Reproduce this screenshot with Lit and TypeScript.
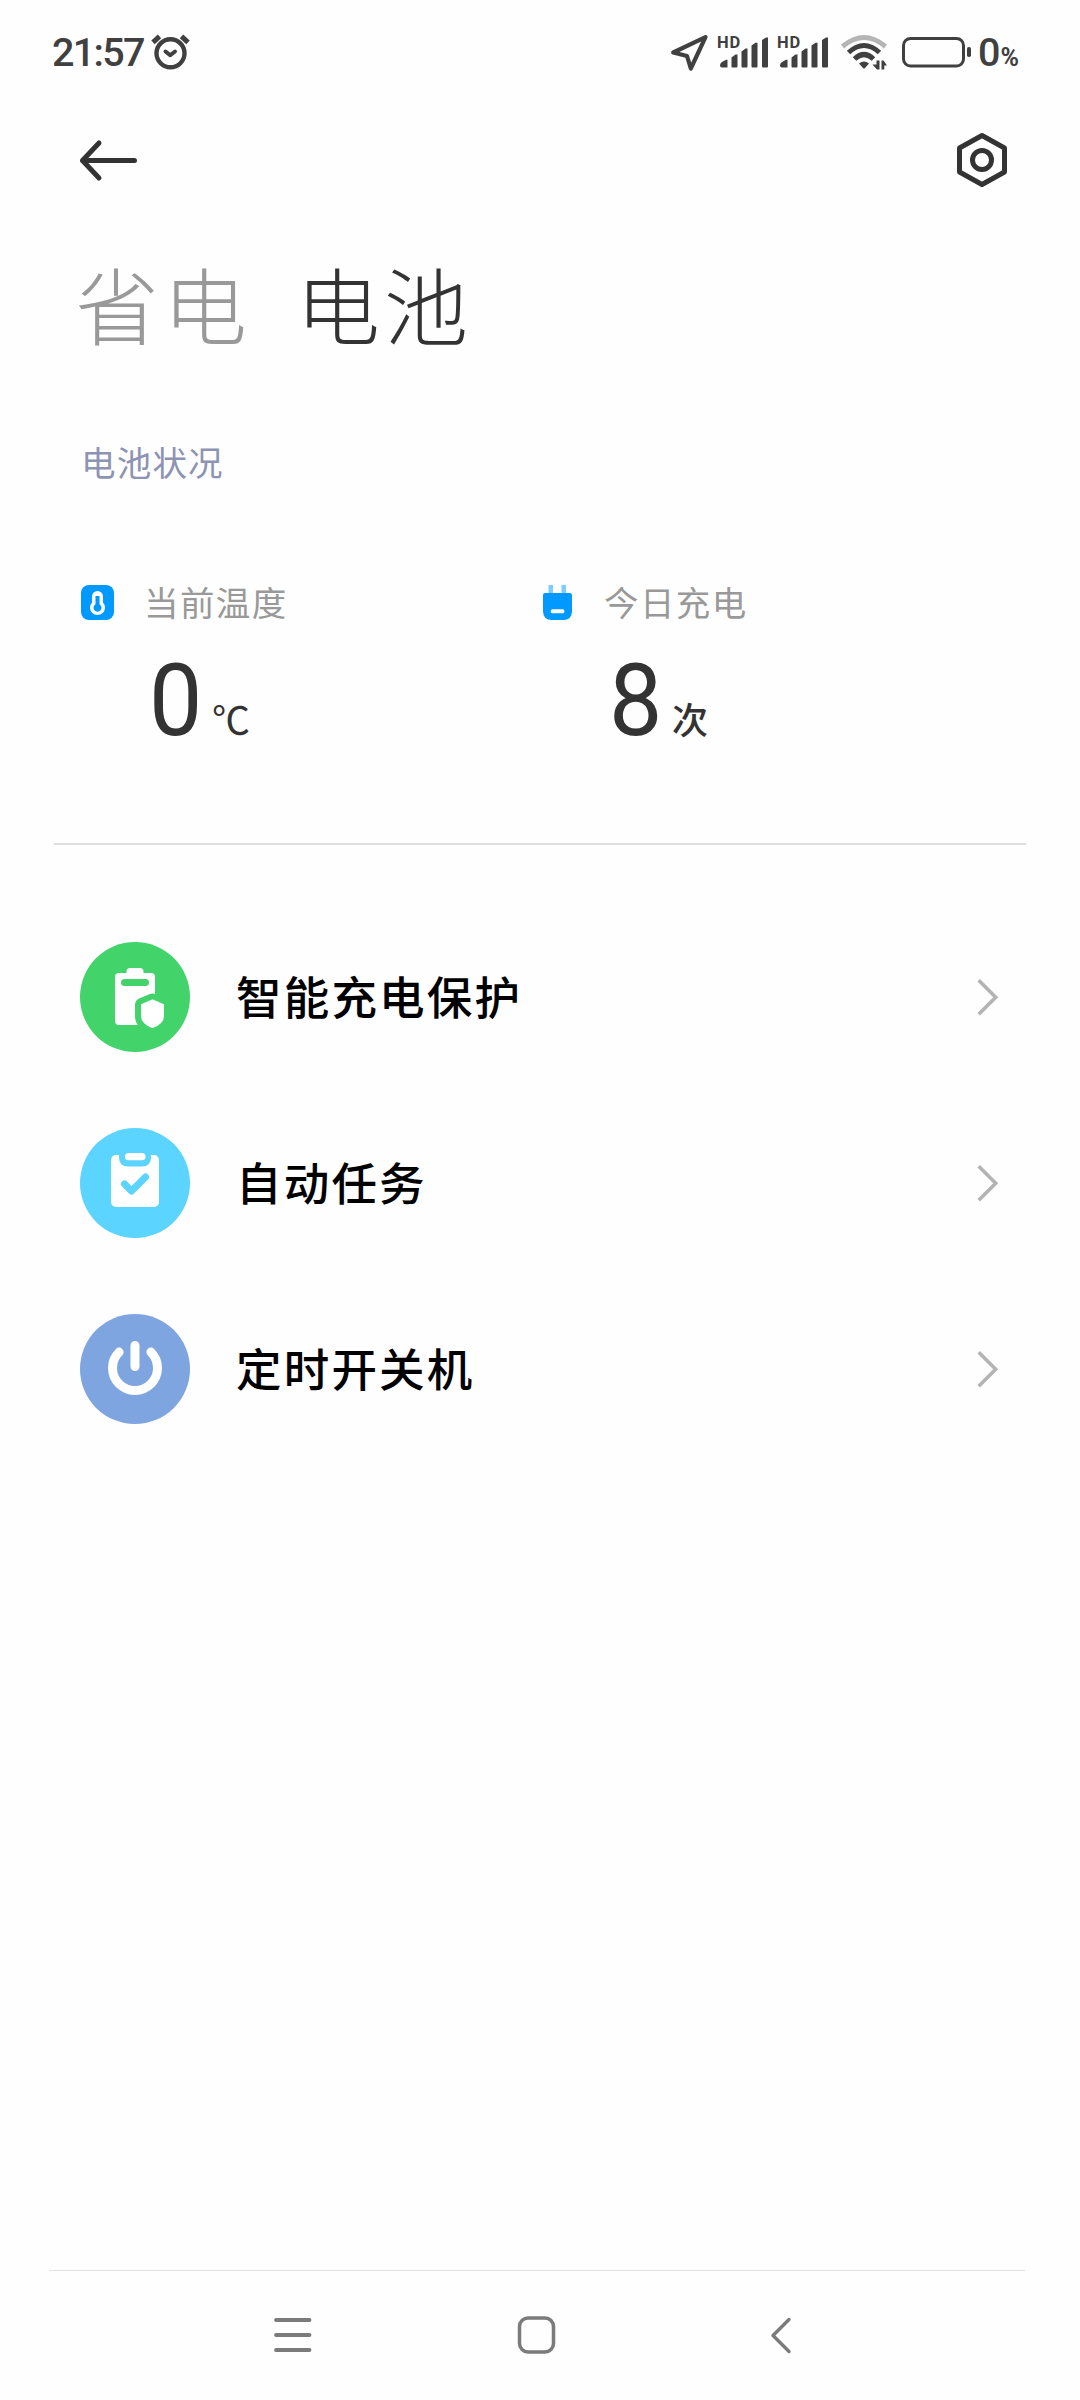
import { LitElement, html, svg, css } from "lit";
import { customElement, property } from "lit/decorators.js";

const signal = () => html`
  <svg class="icon" width="60" height="44" viewBox="0 0 60 44">
    <text class="hd" x="3" y="18">HD</text>
    <path
      fill="#404040"
      d="M6 35.500 Q6 33 8 32 L12 29.800 H13.500 V37.500 H8 Q6 37.500 6 35.500Z
         M17.500 27.500 L21.500 24.500 H23.500 V36.500 Q23.500 37.500 22.500 37.500 H18.500 Q17.500 37.500 17.500 36.500Z
         M27.500 21.500 L31.500 18.500 H33.500 V36.500 Q33.500 37.500 32.500 37.500 H28.500 Q27.500 37.500 27.500 36.500Z
         M37.500 15.500 L41.500 12.800 H43.500 V36.500 Q43.500 37.500 42.500 37.500 H38.500 Q37.500 37.500 37.500 36.500Z
         M48 10 L52 7.500 H54 V36.500 Q54 37.500 53 37.500 H49 Q48 37.500 48 36.500Z"
    />
  </svg>
`;

@customElement("status-bar")
export class StatusBar extends LitElement {
  static styles = css`
    :host {
      display: flex;
      align-items: flex-start;
      height: 104px;
      padding: 30px 56px 0 52px;
      box-sizing: border-box;
      color: #404040;
      font-family: Roboto, "Noto Sans CJK SC", sans-serif;
      font-weight: 500;
    }
    .icon {
      display: block;
      flex: none;
    }
    .time {
      width: 97px;
      font-size: 39.500px;
      line-height: 46px;
      letter-spacing: -1.700px;
      white-space: nowrap;
    }
    .spacer {
      flex: 1;
    }
    .level {
      display: flex;
      align-items: baseline;
      width: 46px;
      line-height: 46px;
      font-size: 39.500px;
    }
    .percent {
      font-size: 25px;
      font-weight: 700;
    }
    .hd {
      font: 700 16.5px Roboto, sans-serif;
      letter-spacing: 0.8px;
      fill: #404040;
    }
  `;

  render() {
    return html`
      <span class="time">21:57</span>
      <svg class="icon" width="44" height="44" viewBox="0 0 44 44" fill="none" stroke="#404040" stroke-linecap="round" stroke-linejoin="round">
        <circle cx="21.500" cy="23.300" r="14" stroke-width="4.400" />
        <path d="M16.500 21.500 L21.200 25.300 L26 21.500" stroke-width="4" />
        <path d="M4 12.300 L10.500 6.300 M39 12.300 L32.500 6.300" stroke-width="5" stroke-linecap="butt" />
      </svg>
      <span class="spacer"></span>
      <svg class="icon" width="46" height="44" viewBox="0 0 46 44">
        <path
          d="M5.200 22.500 L37.500 7.200 L22.800 38.500 L19 26 Z"
          fill="none" stroke="#404040" stroke-width="4.200" stroke-linejoin="round"
        />
      </svg>
      ${signal()}${signal()}
      <svg class="icon" width="64" height="44" viewBox="0 0 64 44" fill="none">
        <path d="M8.500 16.500 Q30 -1.500 51.500 16.500" stroke="#b5b5b5" stroke-width="5" />
        <path d="M14.500 22.500 Q30 8.500 45.500 22.500" stroke="#404040" stroke-width="5" />
        <path d="M20.500 29 Q30 20 39.500 29" stroke="#404040" stroke-width="5" />
        <path d="M25 33.500 Q30 29.500 35 33.500 L31 38 Q30 39 29 38Z" fill="#404040" />
        <path d="M45.500 30.500 V39.500 H43 L38.500 34.500 H42.500 V30.500Z M47.500 39.500 V30.500 H49.500 L53 35.500 H50.300 V39.500Z" fill="#404040" />
      </svg>
      <svg class="icon" width="80" height="44" viewBox="0 0 80 44">
        <rect x="5.500" y="8.500" width="60" height="27.500" rx="7" fill="none" stroke="#404040" stroke-width="3" />
        <rect x="69" y="17" width="4" height="10" rx="1.800" fill="#404040" />
      </svg>
      <span class="level">0<span class="percent">%</span></span>
    `;
  }
}

@customElement("stat-card")
export class StatCard extends LitElement {
  @property() icon = "";
  @property() label = "";
  @property() value = "";
  @property() unit = "";

  static styles = css`
    :host {
      display: block;
      width: 460px;
    }
    .head {
      display: flex;
      align-items: flex-start;
      height: 50px;
    }
    .icon {
      display: block;
      width: 36px;
      height: 38px;
      margin: 5px 28px 0 0;
    }
    .label {
      color: #999;
      font-size: 34.500px;
      letter-spacing: 1.400px;
      line-height: 46px;
    }
    .reading {
      display: flex;
      align-items: baseline;
      padding-left: 69px;
      height: 120px;
      line-height: 120px;
      margin-top: 13px;
      color: #333;
    }
    .value {
      width: 63px;
      font-family: Roboto, sans-serif;
      font-size: 101px;
      transform: scaleX(0.94);
      transform-origin: 0 50%;
    }
    .unit {
      font-size: 36px;
      position: relative;
      top: -1px;
    }
    .thin {
      font-size: 38px;
    }
    .bold {
      font-weight: 500;
    }
  `;

  private glyph() {
    return this.icon === "temperature"
      ? svg`
          <rect x="1" y="2" width="33" height="35" rx="8" fill="#0099ff" />
          <path d="M12 13.500 a5.500 5.500 0 0 1 11 0 V19.500 a7.500 7.500 0 1 1 -11 0Z" fill="#fff" />
          <path d="M15.500 13 h4 v8.300 a4 4 0 1 1 -4 0Z" fill="#0099ff" />`
      : svg`
          <path d="M8.500 2 h4.500 v8 h-4.500Z M21.500 2 h4.500 v8 h-4.500Z" fill="#7fccff" />
          <path d="M3 12 q0 -2 2 -2 h25 q2 0 2 2 v16 q0 9 -9 9 h-11 q-9 0 -9 -9Z" fill="#0099ff" />
          <rect x="10.800" y="26.300" width="13.500" height="4" rx="1.500" fill="#fff" />`;
  }

  render() {
    return html`
      <div class="head">
        <svg class="icon" viewBox="0 0 36 38">${this.glyph()}</svg>
        <span class="label">${this.label}</span>
      </div>
      <div class="reading">
        <span class="value">${this.value}</span>
        <span class="unit ${this.icon === "temperature" ? "thin" : "bold"}">${this.unit}</span>
      </div>
    `;
  }
}

const ROW_ICONS: Record<string, unknown> = {
  protect: svg`
    <circle cx="55" cy="55" r="55" fill="#42d46b" />
    <path d="M39 31 H46.500 V29.500 Q46.500 26 50 26 H60 Q63.500 26 63.500 29.500 V31 H71 Q75 31 75 35 V83 H39 Q35 83 35 79 V35 Q35 31 39 31Z" fill="#fff" />
    <rect x="41" y="37" width="28" height="7" rx="3.500" fill="#42d46b" />
    <path d="M72.500 58.500 L83 63 V74 Q83 81 72.500 85 Q62 81 62 74 V63Z" fill="#42d46b" stroke="#42d46b" stroke-width="14" stroke-linejoin="round" />
    <path d="M72.500 58.500 L83 63 V74 Q83 81 72.500 85 Q62 81 62 74 V63Z" fill="#fff" stroke="#fff" stroke-width="2" stroke-linejoin="round" />`,
  task: svg`
    <circle cx="55" cy="55" r="55" fill="#5bd4ff" />
    <rect x="31" y="27" width="48" height="52" rx="5" fill="#fff" />
    <path d="M39 26 V29.500 Q39 38.500 48 38.500 H62 Q71 38.500 71 29.500 V26Z" fill="#5bd4ff" />
    <rect x="45" y="25" width="20.500" height="7.300" rx="3.600" fill="#fff" />
    <path d="M44.500 56 L51.500 63 L65.500 49" fill="none" stroke="#5bd4ff" stroke-width="7" stroke-linecap="round" stroke-linejoin="round" />`,
  power: svg`
    <circle cx="55" cy="55" r="55" fill="#7fa5e0" />
    <path d="M39.100 38.100 A22.500 22.500 0 1 0 70.900 38.100 M55 31.500 V52.500" fill="none" stroke="#fff" stroke-width="9" stroke-linecap="round" />`,
};

@customElement("menu-row")
export class MenuRow extends LitElement {
  @property() icon = "";
  @property() label = "";

  static styles = css`
    :host {
      display: flex;
      align-items: center;
      height: 186px;
      padding: 0 76px 0 80px;
    }
    .badge {
      flex: none;
      width: 110px;
      height: 110px;
      margin-right: 46px;
    }
    .label {
      flex: 1;
      color: #000;
      font-size: 45.500px;
      font-weight: 500;
      letter-spacing: 2.200px;
      line-height: 66px;
      padding-bottom: 5px;
    }
    .chevron {
      flex: none;
      width: 32px;
      height: 44px;
    }
  `;

  render() {
    return html`
      <svg class="badge" viewBox="0 0 110 110">${ROW_ICONS[this.icon]}</svg>
      <span class="label">${this.label}</span>
      <svg class="chevron" viewBox="0 0 32 44">
        <path d="M6.700 5.200 L23.700 22.200 L6.700 39.200" fill="none" stroke="#b3b3b3" stroke-width="3.600" />
      </svg>
    `;
  }
}

@customElement("app-root")
export class AppRoot extends LitElement {
  static styles = css`
    :host {
      display: flex;
      flex-direction: column;
      height: 2400px;
      box-sizing: border-box;
      background: #fefefe;
      font-family: "Noto Sans CJK SC", sans-serif;
    }
    .toolbar {
      display: flex;
      justify-content: space-between;
      align-items: center;
      height: 112px;
      padding: 0 68px 0 75px;
    }
    .tool {
      display: block;
    }
    .tabs {
      display: flex;
      gap: 45px;
      height: 128px;
      padding: 25px 0 0 75px;
      box-sizing: content-box;
      font-size: 84px;
      font-weight: 300;
      letter-spacing: 4px;
      line-height: 124px;
    }
    .tab {
      color: #999;
    }
    .active {
      color: #333;
    }
    .section {
      margin-top: 67px;
      padding-left: 81px;
      height: 52px;
      line-height: 51px;
      font-size: 34.500px;
      letter-spacing: 1.200px;
      color: #8d94b3;
    }
    .stats {
      display: flex;
      margin-top: 90px;
      padding-left: 80px;
      height: 265px;
    }
    .rule {
      height: 2px;
      margin: 0 54px;
      background: #dedede;
    }
    .menu {
      margin-top: 59px;
      flex: 1;
    }
    .nav {
      display: flex;
      justify-content: space-between;
      align-items: center;
      height: 130px;
      margin: 0 55px 0 49px;
      padding: 0 222px 0 222px;
      border-top: 1px solid #e2e2e2;
      box-sizing: border-box;
    }
  `;

  render() {
    return html`
      <status-bar></status-bar>
      <header class="toolbar">
        <svg class="tool" width="64" height="54" viewBox="0 0 64 54">
          <path d="M24 10 L7.500 27.500 L24 45 M7.500 27.500 H59.500" fill="none" stroke="#333" stroke-width="5" stroke-linecap="round" stroke-linejoin="round" />
        </svg>
        <svg class="tool" width="60" height="60" viewBox="0 0 60 60">
          <path d="M30 5.500 L52.500 18 V42 L30 54.500 L7.500 42 V18Z" fill="none" stroke="#333" stroke-width="5" stroke-linejoin="round" />
          <circle cx="30" cy="30" r="9.500" fill="none" stroke="#333" stroke-width="5" />
        </svg>
      </header>
      <nav class="tabs">
        <span class="tab">省电</span>
        <span class="tab active">电池</span>
      </nav>
      <div class="section">电池状况</div>
      <section class="stats">
        <stat-card icon="temperature" label="当前温度" value="0" unit="℃"></stat-card>
        <stat-card icon="charge" label="今日充电" value="8" unit="次"></stat-card>
      </section>
      <div class="rule"></div>
      <main class="menu">
        <menu-row icon="protect" label="智能充电保护"></menu-row>
        <menu-row icon="task" label="自动任务"></menu-row>
        <menu-row icon="power" label="定时开关机"></menu-row>
      </main>
      <footer class="nav">
        <svg class="tool" width="44" height="44" viewBox="0 0 44 44">
          <path d="M5 6 H38.500 M5 21 H38.500 M5 36 H38.500" stroke="#7b7b7b" stroke-width="3.800" stroke-linecap="round" />
        </svg>
        <svg class="tool" width="44" height="44" viewBox="0 0 44 44">
          <rect x="4.500" y="4" width="34" height="34" rx="8.500" fill="none" stroke="#7b7b7b" stroke-width="3.500" />
        </svg>
        <svg class="tool" width="44" height="44" viewBox="0 0 44 44">
          <path d="M30 5.500 L14 21.500 L30 37.500" fill="none" stroke="#7b7b7b" stroke-width="3.400" stroke-linecap="round" stroke-linejoin="round" />
        </svg>
      </footer>
    `;
  }
}
